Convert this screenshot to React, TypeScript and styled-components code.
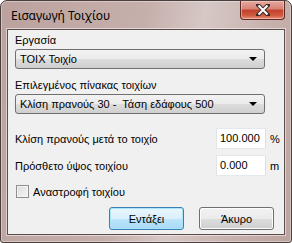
import styled, { createGlobalStyle } from "styled-components";

const Global = createGlobalStyle`
  html, body {
    margin: 0;
    padding: 0;
    background: #ffffff;
  }
  body {
    font-family: "Liberation Sans", Arial, sans-serif;
    font-size: 11px;
    color: #000;
  }
`;

const Window = styled.div`
  width: 292px;
  height: 243px;
  box-sizing: border-box;
  border: 1px solid #4a3f3d;
  border-radius: 7px 7px 3px 3px;
  background: linear-gradient(100deg, #bca29e 0%, #c6b0ac 45%, #d6c8c5 62%, #c9b3af 80%, #bca39f 100%);
  display: flex;
  flex-direction: column;
  box-shadow: inset 0 0 0 1px rgba(255, 255, 255, 0.35);
`;

const TitleBar = styled.div`
  height: 28px;
  display: flex;
  align-items: flex-start;
  justify-content: space-between;
  padding: 0 6px 0 10px;
`;

const Title = styled.div`
  font-family: "Noto Sans", "Open Sans", sans-serif;
  font-size: 12px;
  line-height: 14px;
  margin-top: 8px;
  color: #000;
`;

const CloseButton = styled.div`
  width: 45px;
  height: 19px;
  box-sizing: border-box;
  border: 1px solid #5c2a24;
  border-top: none;
  border-radius: 0 0 4px 4px;
  background: linear-gradient(#e4a99f 0%, #d88274 45%, #c2402c 50%, #cf5a3f 80%, #e8937a 100%);
  display: flex;
  align-items: center;
  justify-content: center;
  box-shadow: inset 0 0 0 1px rgba(255, 210, 200, 0.55);
`;

const Client = styled.div`
  flex: 1;
  margin: 0 6px 7px 6px;
  border: 1px solid #5a4d4b;
  outline: 1px solid rgba(255, 255, 255, 0.5);
  background: #f0f0f0;
  padding: 4px 19px 0 7px;
  display: flex;
  flex-direction: column;
`;

const Label = styled.div<{ $top?: number }>`
  line-height: 13px;
  margin-top: ${(p) => p.$top ?? 0}px;
  white-space: nowrap;
`;

const Combo = styled.div`
  height: 20px;
  margin-top: 2px;
  box-sizing: border-box;
  border: 1px solid #707070;
  border-radius: 3px;
  background: linear-gradient(#f2f2f2 0%, #ebebeb 50%, #dddddd 51%, #cfcfcf 100%);
  display: flex;
  align-items: center;
  justify-content: space-between;
  padding: 0 7px 0 4px;
  white-space: pre;
`;

const Arrow = styled.span`
  width: 0;
  height: 0;
  border-left: 4px solid transparent;
  border-right: 4px solid transparent;
  border-top: 4px solid #000;
`;

const FieldRow = styled.div<{ $top: number }>`
  display: flex;
  align-items: center;
  margin-top: ${(p) => p.$top}px;
  margin-right: -19px;
  height: 21px;
`;

const FieldLabel = styled.div`
  flex: 1;
`;

const Input = styled.div`
  width: 50px;
  height: 21px;
  box-sizing: border-box;
  border: 1px solid #abadb3;
  border-top-color: #e3e9ef;
  border-left-color: #e2e3ea;
  border-right-color: #dbdfe6;
  border-bottom-color: #e3e9ef;
  background: #fff;
  padding: 3px 0 0 3px;
  line-height: 13px;
`;

const Unit = styled.div`
  width: 14px;
  margin-left: 4px;
`;

const CheckRow = styled.label`
  display: flex;
  align-items: center;
  gap: 4px;
  margin-top: 9px;
  margin-left: 1px;
  height: 13px;
`;

const Box = styled.span`
  width: 13px;
  height: 13px;
  box-sizing: border-box;
  border: 1px solid #8e8f8f;
  background: linear-gradient(135deg, #dcdcdc, #f6f6f6);
  box-shadow: inset 0 0 0 1px #f4f4f4;
`;

const Buttons = styled.div`
  display: flex;
  justify-content: flex-end;
  gap: 15px;
  margin-top: 9px;
  margin-right: -9px;
`;

const Button = styled.div<{ $default?: boolean }>`
  width: 75px;
  height: 23px;
  box-sizing: border-box;
  border: 1px solid ${(p) => (p.$default ? "#3c7fb1" : "#707070")};
  border-radius: 3px;
  background: ${(p) =>
    p.$default
      ? "linear-gradient(#eaf6fd 0%, #d9f0fc 50%, #bee6fd 51%, #a7d9f5 100%)"
      : "linear-gradient(#f2f2f2 0%, #ebebeb 50%, #dddddd 51%, #cfcfcf 100%)"};
  box-shadow: inset 0 0 0 1px ${(p) => (p.$default ? "#a8e4fa" : "#fcfcfc")};
  display: flex;
  align-items: center;
  justify-content: center;
`;

export default function App() {
  return (
    <>
      <Global />
      <Window>
        <TitleBar>
          <Title>Εισαγωγή Τοιχίου</Title>
          <CloseButton>
            <svg width="14" height="12" viewBox="0 0 14 12">
              <path d="M2 1 L12 11 M12 1 L2 11" stroke="#3a2a28" strokeWidth="4" strokeLinecap="square" />
              <path d="M2.5 1.5 L11.5 10.5 M11.5 1.5 L2.5 10.5" stroke="#ffffff" strokeWidth="2" />
            </svg>
          </CloseButton>
        </TitleBar>
        <Client>
          <Label>Εργασία</Label>
          <Combo>
            <span>TOIX Τοιχίο</span>
            <Arrow />
          </Combo>
          <Label $top={10}>Επιλεγμένος πίνακας τοιχίων</Label>
          <Combo>
            <span>Κλίση πρανούς 30 -  Τάση εδάφους 500</span>
            <Arrow />
          </Combo>
          <FieldRow $top={14}>
            <FieldLabel>Κλίση πρανούς μετά το τοιχίο</FieldLabel>
            <Input>100.000</Input>
            <Unit>%</Unit>
          </FieldRow>
          <FieldRow $top={6}>
            <FieldLabel>Πρόσθετο ύψος τοιχίου</FieldLabel>
            <Input>0.000</Input>
            <Unit>m</Unit>
          </FieldRow>
          <CheckRow>
            <Box />
            <span>Αναστροφή τοιχίου</span>
          </CheckRow>
          <Buttons>
            <Button $default>Εντάξει</Button>
            <Button>Άκυρο</Button>
          </Buttons>
        </Client>
      </Window>
    </>
  );
}
